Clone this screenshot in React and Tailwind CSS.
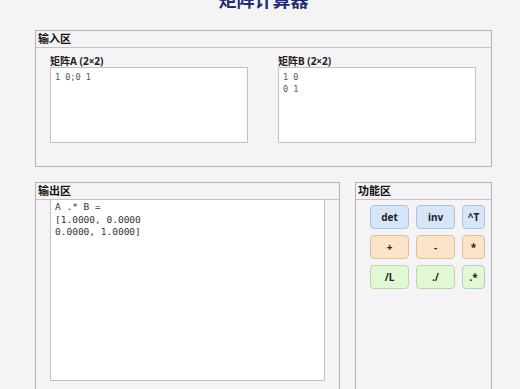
import React from 'react';

const sans = { fontFamily: '"Noto Sans", "Noto Sans CJK SC", sans-serif' };

const Panel = ({ title, className = '', children }) => {
  return (
    <section className={`border border-[#b4b4b4] bg-[#f6f3f6] ${className}`}>
      <div className="h-[17px] border-b border-[#c4c4c4] pl-[2px] text-[11px] font-bold leading-[16px] text-[#111]">
        {title}
      </div>
      {children}
    </section>
  );
};

const MatrixInput = ({ label, value }) => {
  return (
    <div className="flex flex-col">
      <label className="h-[15px] pt-[2px] text-[10px] font-bold leading-[14px] text-[#222]">{label}</label>
      <textarea
        readOnly
        defaultValue={value}
        className="h-[76px] resize-none border border-[#c2c2c2] bg-white px-[4px] pt-[3px] font-['DejaVu_Sans_Mono',monospace] text-[8.5px] leading-[12px] text-[#555] outline-none"
      />
    </div>
  );
};

const buttons = [
  { text: 'det', cls: 'bg-[#d6e6f8] border-[#a9c3de]' },
  { text: 'inv', cls: 'bg-[#d6e6f8] border-[#a9c3de]' },
  { text: '^T', cls: 'bg-[#d6e6f8] border-[#a9c3de]' },
  { text: '+', cls: 'bg-[#fde3c8] border-[#d9bfa2]' },
  { text: '-', cls: 'bg-[#fde3c8] border-[#d9bfa2]' },
  { text: '*', cls: 'bg-[#fde3c8] border-[#d9bfa2]' },
  { text: '/L', cls: 'bg-[#e2f7d3] border-[#bcd5ab]' },
  { text: './', cls: 'bg-[#e2f7d3] border-[#bcd5ab]' },
  { text: '.*', cls: 'bg-[#e2f7d3] border-[#a9cfc6]' },
];

export default function App() {
  return (
    <div className="h-[389px] w-[520px] overflow-hidden bg-[#f4f4f4] pl-[35px]" style={sans}>
      <div className="w-[457px]">
        <h1 className="-mt-[12px] h-[24px] text-center text-[18px] font-bold leading-[24px] text-[#262b6e]">
          矩阵计算器
        </h1>

        <Panel title="输入区" className="mt-[18px] h-[137px]">
          <div className="grid grid-cols-[198px_198px] gap-x-[30px] px-[14px] pt-[4px]">
            <MatrixInput label="矩阵A (2×2)" value="1 0;0 1" />
            <MatrixInput label={'矩阵B (2×2)'} value={'1 0\n0 1'} />
          </div>
        </Panel>

        <div className="mt-[15px] flex gap-[15px]">
          <Panel title="输出区" className="h-[230px] w-[305px]">
            <div className="px-[14px]">
              <pre className="-mt-[1px] h-[182px] border border-[#c2c2c2] bg-white px-[4px] pt-[1px] font-['DejaVu_Sans_Mono',monospace] text-[9.5px] leading-[12.5px] text-[#333]">
{`A .* B =
[1.0000, 0.0000
0.0000, 1.0000]`}
              </pre>
            </div>
          </Panel>

          <Panel title="功能区" className="h-[230px] w-[137px]">
            <div className="grid grid-cols-[39px_39px_23px] gap-x-[7px] gap-y-[6px] pl-[14px] pt-[5px]">
              {buttons.map((b) => (
                <button
                  key={b.text}
                  className={`flex h-[24px] items-center justify-center rounded-[4px] border text-[10px] font-bold text-[#222] ${b.cls}`}
                >
                  {b.text}
                </button>
              ))}
            </div>
          </Panel>
        </div>
      </div>
    </div>
  );
}
